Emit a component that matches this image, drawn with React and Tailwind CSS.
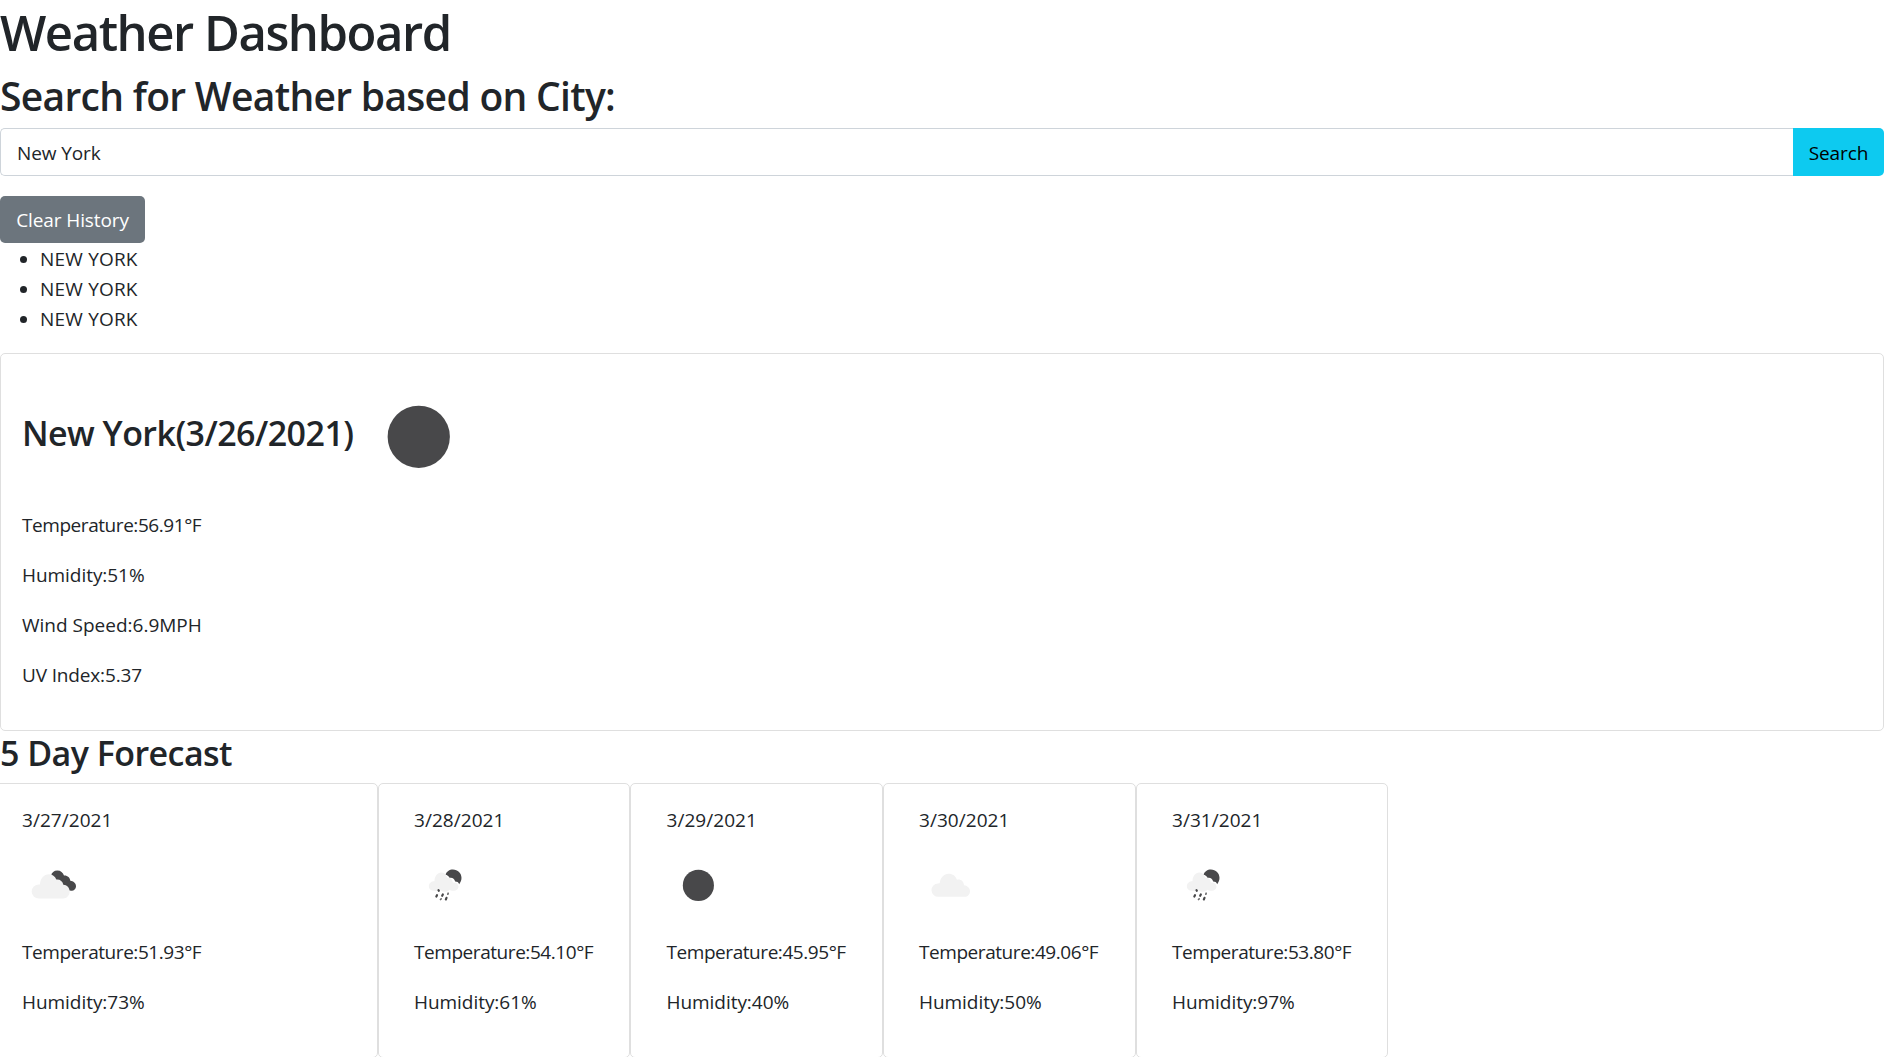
const CLOUD = "M54 127a20 20 0 0 1-1-40c1-1 4-1 5-1 2-16 13-28 27-28 12 0 21 7 25 18 10-3 20 4 21 16 10 1 18 8 18 18 0 9-7 17-17 17z";

function NightCloudy() {
  return (
    <svg viewBox="4 -1.5 187.5 187.5" className="block size-full">
      <path d="M91 63c2-9 9-15 19-15 10 0 17 6 20 15 10-1 18 6 19 16 9 1 17 7 17 16 0 8-7 14-14 14-9 0-14-6-22-10l-29-18c-3-9-6-13-10-18z" fill="#48484a" />
      <path d="M55 132a21 21 0 0 1-2-42l5 0c0-18 12-31 27-31 10 0 18 6 22 16 11-1 19 5 21 16 11 0 19 10 19 20 0 11-8 21-19 21z" fill="#f2f2f2" />
    </svg>
  );
}

function NightRain() {
  return (
    <svg viewBox="-17.5 -1.5 187.5 187.5" className="block size-full">
      <path d="M77 61c3-10 12-16 22-16 15 0 26 11 26 25 0 8-3 14-7 19-2-6-6-8-12-8-2-9-9-13-17-11-3-5-7-8-12-9z" fill="#48484a" />
      <path d="M43 109c-9 0-16-6-16-14 0-9 7-15 17-15 0-15 9-26 20-26 9 0 16 6 18 16 9-2 16 4 17 14 9-1 17 4 17 12 0 7-6 13-14 13-7 0-10-1-13-3-3 4-8 6-13 6-6 0-10-2-13-5-5 3-12 3-20 2z" fill="#f2f2f2" />
      <g stroke="#48484a" strokeWidth="6.500" strokeLinecap="round">
        <path d="M56 107l1 2M49.500 126l2-4M67 124l2-4M78 135l2-5" />
        <path d="M84 119l1-3M62 135l2-2" strokeWidth="5" opacity=".8" />
      </g>
    </svg>
  );
}

function Cloud() {
  return (
    <svg viewBox="-4 -1.5 187.5 187.5" className="block size-full">
      <path d={CLOUD} fill="#f2f2f2" />
    </svg>
  );
}

function NewMoon() {
  return (
    <svg viewBox="0 0 100 100" className="block size-full">
      <circle cx="50.200" cy="50.200" r="24.900" fill="#48484a" />
    </svg>
  );
}

const days = [
  { date: "3/27/2021", Icon: NightCloudy, temp: "51.93", humidity: 73, box: "w-[393px] pl-9" },
  { date: "3/28/2021", Icon: NightRain, temp: "54.10", humidity: 61, box: "w-[252px] pl-[35px]" },
  { date: "3/29/2021", Icon: NewMoon, temp: "45.95", humidity: 40, box: "w-[253px] pl-[35.500px]" },
  { date: "3/30/2021", Icon: Cloud, temp: "49.06", humidity: 50, box: "w-[253px] pl-[35px]" },
  { date: "3/31/2021", Icon: NightRain, temp: "53.80", humidity: 97, box: "w-[252px] pl-[35px]" },
];

export default function App() {
  return (
    <div className="h-[1057px] w-full overflow-hidden bg-white font-['Open_Sans',sans-serif] text-[19px] leading-[30px] text-[#212529]">
      <main className="w-[1884px]">
        <h1 className="mb-1.5 text-[49px] leading-[64px] font-[560] tracking-[-1.45px] whitespace-nowrap">Weather Dashboard</h1>
        <h2 className="mb-2 pt-0.5 text-[39px] leading-[48px] font-[560] tracking-[-0.7px] whitespace-nowrap">Search for Weather based on City:</h2>
        <form className="mb-5 flex h-12" onSubmit={(e) => e.preventDefault()}>
          <input
            defaultValue="New York"
            className="min-w-0 flex-1 rounded-l-[5px] border border-r-0 border-[#ced4da] bg-white px-4 pt-px tracking-[-0.1px] outline-none"
          />
          <button className="w-[91px] rounded-r-[5px] bg-[#0dcaf0] pt-px tracking-[-0.1px] text-black">Search</button>
        </form>
        <button className="block h-[47px] w-[145px] rounded-[5px] bg-[#6c757d] tracking-[-0.1px] whitespace-nowrap text-white">Clear History</button>
        <ul className="mb-[19px] list-disc pt-px pl-10 tracking-[0.2px]">
          <li>NEW YORK</li>
          <li>NEW YORK</li>
          <li>NEW YORK</li>
        </ul>
        <section className="h-[378px] rounded-[5px] border border-[#dfdfdf] p-5">
          <div className="mb-[11px] flex h-[125px] items-center">
            <h3 className="w-[335px] pb-2 pl-px text-[34px] leading-[42px] font-[560] tracking-[-0.55px] whitespace-nowrap">New York(3/26/2021)</h3>
            <div className="size-[125px]">
              <NewMoon />
            </div>
          </div>
          <div className="flex flex-col gap-5 pl-px">
            <p className="tracking-[-0.44px]">Temperature:56.91°F</p>
            <p className="tracking-[-0.05px]">Humidity:51%</p>
            <p>Wind Speed:6.9MPH</p>
            <p className="tracking-[-0.15px]">UV Index:5.37</p>
          </div>
        </section>
        <h3 className="mb-[9px] pt-px text-[34px] leading-[42px] font-[560] tracking-[-0.55px]">5 Day Forecast</h3>
        <div className="-ml-[15px] flex">
          {days.map(({ date, Icon, temp, humidity, box }) => (
            <article
              key={date}
              className={`h-[275px] shrink-0 rounded-[5px] border border-[#dfdfdf] pt-[21px] whitespace-nowrap ${box}`}
            >
              <p className="mb-[19px] tracking-[0.05px]">{date}</p>
              <div className="mb-5 size-[62.500px]">
                <Icon />
              </div>
              <p className="mb-5 tracking-[-0.44px]">Temperature:{temp}°F</p>
              <p className="tracking-[-0.05px]">Humidity:{humidity}%</p>
            </article>
          ))}
        </div>
      </main>
    </div>
  );
}
